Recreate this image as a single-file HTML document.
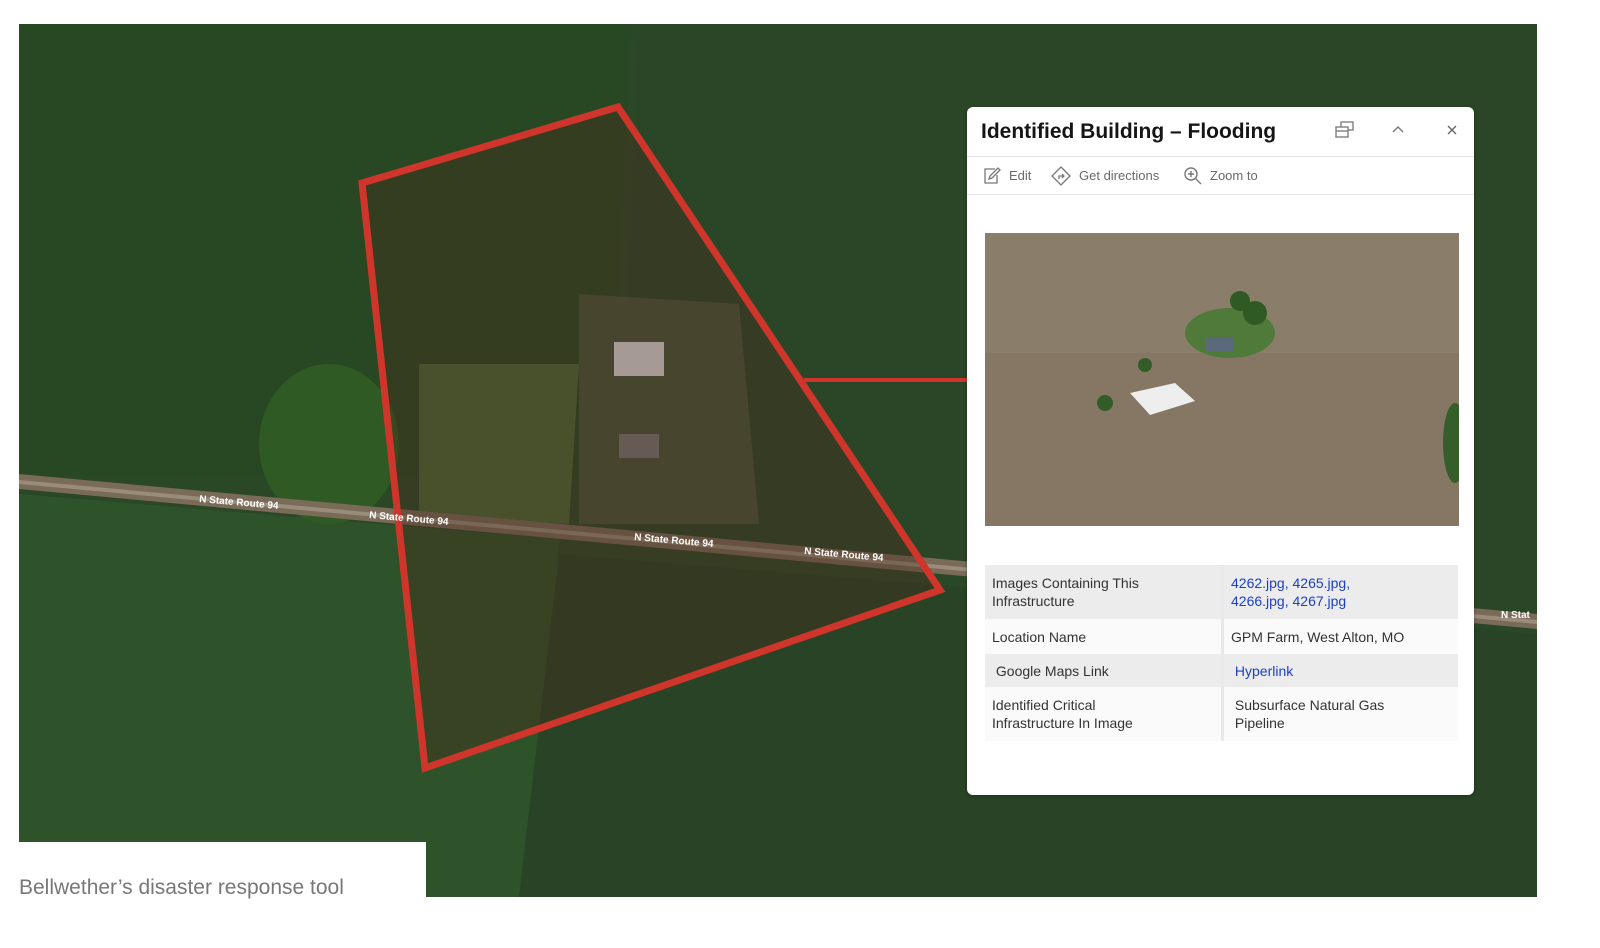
<!DOCTYPE html>
<html><head><meta charset="utf-8"><style>
body{margin:0;width:1600px;height:948px;background:#fff;position:relative;overflow:hidden;font-family:"Liberation Sans",sans-serif}
#map{position:absolute;left:19px;top:24px}
.pop{position:absolute;left:967px;top:107px;width:507px;height:688px;background:#fff;border-radius:6px;box-shadow:0 1px 4px rgba(0,0,0,.3)}
.hd{height:49px;border-bottom:1px solid #e4e4e4;position:relative}
.hd h1{margin:0;position:absolute;left:14px;top:13px;font-size:21px;font-weight:bold;color:#151515}
.tb{height:37px;border-bottom:1px solid #e4e4e4;position:relative;font-size:13px;color:#6a6a6a}
.tb span{position:absolute;top:11px}
table{position:absolute;left:18px;top:458px;width:473px;border-collapse:collapse;font-size:14px;color:#333;line-height:18px}
td{padding:0 7px;vertical-align:middle;white-space:nowrap}
td:first-child{border-right:3px solid #e8e8e8;width:222px}
tr.g{background:#ececec}tr.w{background:#fafafa}
.l{color:#1d3fc4}
.cap{position:absolute;left:19px;top:842px;width:407px;height:55px;background:#fff}
.cap span{position:absolute;left:0;top:34px;font-size:21px;color:#777}
</style></head><body>
<svg id="map" width="1518" height="873" viewBox="0 0 1518 873">
<rect width="1518" height="873" fill="#2a4826"/>
<polygon points="0,0 612,0 590,455 0,450" fill="#284723"/>
<polygon points="620,0 1518,0 1518,595 935,545 600,520" fill="#2b4627"/>
<polygon points="0,470 540,515 520,873 0,873" fill="#2e5229"/>
<polygon points="540,530 1518,610 1518,873 500,873" fill="#284325"/>
<polygon points="560,270 720,280 740,500 560,500" fill="#48553a"/>
<polygon points="400,340 560,340 550,500 400,490" fill="#4a6636"/>
<ellipse cx="310" cy="420" rx="70" ry="80" fill="#2f5a24"/>
<polygon points="0,450 1518,590 1518,605 0,465" fill="#7a6a58"/>
<polygon points="0,456 1518,596 1518,600 0,460" fill="#9a8c7a"/>
<rect x="595" y="318" width="50" height="34" fill="#ddd"/>
<rect x="600" y="410" width="40" height="24" fill="#777"/>
<polygon points="343,159 599,83 921,566 406,744" fill="#4a2e1e" fill-opacity=".38" stroke="#d0352c" stroke-width="7" stroke-linejoin="miter"/>
<line x1="785" y1="356" x2="948" y2="356" stroke="#d0352c" stroke-width="4"/>
<g font-size="10" fill="#fff" font-weight="bold"><text x="180" y="478" transform="rotate(5 180 478)">N State Route 94</text><text x="350" y="494" transform="rotate(5 350 494)">N State Route 94</text><text x="615" y="516" transform="rotate(5 615 516)">N State Route 94</text><text x="785" y="530" transform="rotate(5 785 530)">N State Route 94</text><text x="1482" y="594">N Stat</text></g>
</svg>
<div class="pop">
<div class="hd"><h1>Identified Building – Flooding</h1>
<svg style="position:absolute;left:368px;top:14px" width="20" height="18" fill="none" stroke="#777" stroke-width="1.3"><rect x="6" y="1" width="12" height="8"/><rect x="1" y="6" width="12" height="10" fill="#fff"/><line x1="1" y1="10" x2="13" y2="10"/></svg>
<svg style="position:absolute;left:425px;top:18px" width="12" height="8" fill="none" stroke="#777" stroke-width="1.4"><path d="M1 7L6 2L11 7"/></svg>
<svg style="position:absolute;left:480px;top:18px" width="10" height="10" stroke="#666" stroke-width="1.4"><path d="M1 1L9 9M9 1L1 9"/></svg>
</div>
<div class="tb">
<svg style="position:absolute;left:16px;top:10px" width="18" height="18" fill="none" stroke="#777" stroke-width="1.3"><path d="M12 2H2V16H14V8"/><path d="M6 12L7 9L15 1L17 3L9 11Z"/></svg><span style="left:42px">Edit</span>
<svg style="position:absolute;left:84px;top:9px" width="20" height="20" fill="none" stroke="#777" stroke-width="1.3"><path d="M10 1L19 10L10 19L1 10Z"/><path d="M8 13V10H13M11 8L13 10L11 12"/></svg><span style="left:112px">Get directions</span>
<svg style="position:absolute;left:216px;top:9px" width="20" height="20" fill="none" stroke="#777" stroke-width="1.4"><circle cx="8" cy="8" r="6"/><path d="M12.5 12.5L18 18M5 8H11M8 5V11"/></svg><span style="left:243px">Zoom to</span>
</div>
<svg style="position:absolute;left:18px;top:126px" width="474" height="293">
<rect width="474" height="293" fill="#857763"/>
<rect width="474" height="120" fill="#8a7e6a"/>
<ellipse cx="245" cy="100" rx="45" ry="25" fill="#4f7a3a"/>
<circle cx="270" cy="80" r="12" fill="#2f5a24"/><circle cx="255" cy="68" r="10" fill="#2f5a24"/>
<rect x="220" y="105" width="28" height="14" fill="#5a6a7a"/>
<polygon points="145,160 190,150 210,168 165,182" fill="#eee"/>
<circle cx="120" cy="170" r="8" fill="#335d28"/><circle cx="160" cy="132" r="7" fill="#335d28"/>
<ellipse cx="470" cy="210" rx="12" ry="40" fill="#355e2a"/>
</svg>
<table>
<tr class="g" style="height:54px"><td>Images Containing This<br>Infrastructure</td><td class="l">4262.jpg, 4265.jpg,<br>4266.jpg, 4267.jpg</td></tr>
<tr class="w" style="height:35px"><td>Location Name</td><td>GPM Farm, West Alton, MO</td></tr>
<tr class="g" style="height:33px"><td>&nbsp;Google Maps Link</td><td class="l">&nbsp;Hyperlink</td></tr>
<tr class="w" style="height:54px"><td>Identified Critical<br>Infrastructure In Image</td><td>&nbsp;Subsurface Natural Gas<br>&nbsp;Pipeline</td></tr>
</table>
</div>
<div class="cap"><span>Bellwether’s disaster response tool</span></div>
</body></html>
